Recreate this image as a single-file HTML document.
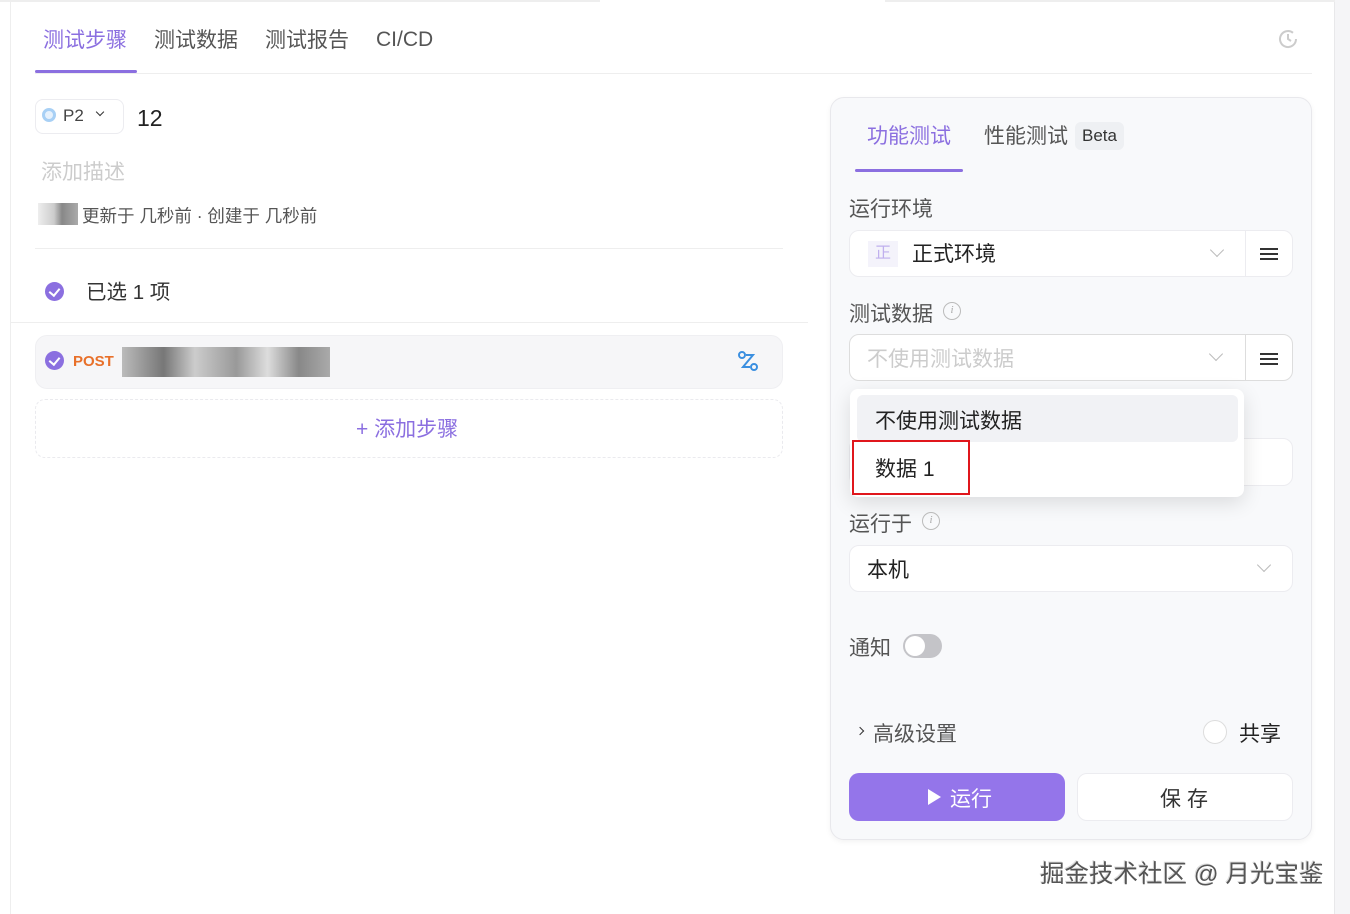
<!DOCTYPE html><html><head><meta charset="utf-8"><style>
*{box-sizing:border-box;margin:0;padding:0}
body{width:1350px;height:914px;overflow:hidden;background:#fff;font-family:"Liberation Sans","Noto Sans CJK SC",sans-serif;color:#333;position:relative}
.a{position:absolute;line-height:1.6}
.purple{color:#8b6fe0}
.box{position:absolute;background:#fff;border:1px solid #ececf0;border-radius:10px}
.chev{position:absolute;width:10px;height:10px;border-right:1.5px solid #bbb;border-bottom:1.5px solid #bbb;transform:rotate(45deg)}
.ham{position:absolute;width:18px;height:12px;border-top:2px solid #333;border-bottom:2px solid #333}
.ham:after{content:"";position:absolute;left:0;right:0;top:3px;border-top:2px solid #333}
.info{position:absolute;width:18px;height:18px;border:1.5px solid #bbb;border-radius:50%;font:italic 11px "Liberation Serif",serif;color:#aaa;text-align:center;line-height:15px}
.cb{position:absolute;width:19px;height:19px;border-radius:50%;background:#8b6fe0}
.cb:after{content:"";position:absolute;left:6px;top:4px;width:5px;height:8px;border-right:2px solid #fff;border-bottom:2px solid #fff;transform:rotate(40deg)}
</style></head><body>
<div class="a" style="left:10px;top:0;width:1px;height:914px;background:#eee"></div>
<div class="a" style="left:1334px;top:0;width:16px;height:914px;background:#f5f5f7;border-left:1px solid #e8e8ea"></div>
<div class="a" style="left:0;top:0;width:600px;height:2px;background:#eee"></div>
<div class="a" style="left:885px;top:0;width:450px;height:2px;background:#eee"></div>
<!-- tabs -->
<div class="a purple" style="left:43px;top:24px;font-size:21px">测试步骤</div>
<div class="a" style="left:154px;top:24px;font-size:21px;color:#555">测试数据</div>
<div class="a" style="left:265px;top:24px;font-size:21px;color:#555">测试报告</div>
<div class="a" style="left:376px;top:23px;font-size:21px;color:#555">CI/CD</div>
<div class="a" style="left:35px;top:70px;width:102px;height:3px;border-radius:2px;background:#8b6fe0"></div>
<div class="a" style="left:35px;top:73px;width:1277px;height:1px;background:#eee"></div>
<svg class="a" style="left:1276px;top:27px" width="24" height="24" viewBox="0 0 24 24" fill="none" stroke="#ccc" stroke-width="2"><path d="M20 12a8 8 0 1 1-3-6.2"/><path d="M12 7v5l3 2"/></svg>
<!-- P2 -->
<div class="box" style="left:35px;top:99px;width:89px;height:35px;border-radius:8px"></div>
<div class="a" style="left:42px;top:108px;width:14px;height:14px;border-radius:50%;border:3px solid #a8d0f5;background:#e6f1fc"></div>
<div class="a" style="left:63px;top:105px;font-size:17px;color:#444;line-height:1.3">P2</div>
<div class="a" style="left:97px;top:109px;width:6px;height:6px;border-right:1.5px solid #333;border-bottom:1.5px solid #333;transform:rotate(45deg)"></div>
<div class="a" style="left:137px;top:104px;font-size:23px;color:#222;line-height:1.3">12</div>
<div class="a" style="left:41px;top:156px;font-size:21px;color:#ccc">添加描述</div>
<div class="a" style="left:38px;top:203px;width:40px;height:22px;background:linear-gradient(90deg,#eee,#ccc 40%,#888 60%,#aaa)"></div>
<div class="a" style="left:82px;top:202px;font-size:17.5px;color:#555">更新于 几秒前 · 创建于 几秒前</div>
<div class="a" style="left:35px;top:248px;width:748px;height:1px;background:#eee"></div>
<div class="cb" style="left:45px;top:282px"></div>
<div class="a" style="left:86px;top:277px;font-size:20.5px;color:#333">已选 1 项</div>
<div class="a" style="left:11px;top:322px;width:797px;height:1px;background:#eee"></div>
<!-- step -->
<div class="a" style="left:35px;top:335px;width:748px;height:54px;background:#f6f6f8;border-radius:12px;border:1px solid #efeff2"></div>
<div class="cb" style="left:45px;top:351px"></div>
<div class="a" style="left:73px;top:352px;font-size:15px;font-weight:bold;color:#e8702a;line-height:1.3">POST</div>
<div class="a" style="left:122px;top:347px;width:208px;height:30px;background:linear-gradient(90deg,#bbb,#777 20%,#ccc 35%,#999 55%,#ddd 70%,#888 85%,#aaa)"></div>
<svg class="a" style="left:737px;top:350px" width="22" height="22" viewBox="0 0 22 22" fill="none" stroke="#3b8fe0" stroke-width="2"><circle cx="5" cy="5" r="3"/><circle cx="17" cy="17" r="3"/><path d="M9 5h7L6 17h7"/></svg>
<div class="a" style="left:35px;top:399px;width:748px;height:59px;border:1.5px dashed #eaeaee;border-radius:10px"></div>
<div class="a purple" style="left:356px;top:413px;font-size:21px">+ 添加步骤</div>
<!-- right panel -->
<div class="a" style="left:830px;top:97px;width:482px;height:743px;background:#f8f9fb;border:1px solid #e8e8ec;border-radius:14px;box-shadow:0 2px 6px rgba(0,0,0,.05)"></div>
<div class="a purple" style="left:867px;top:120px;font-size:21px">功能测试</div>
<div class="a" style="left:855px;top:169px;width:108px;height:3px;border-radius:2px;background:#8b6fe0"></div>
<div class="a" style="left:984px;top:120px;font-size:21px;color:#555">性能测试</div>
<div class="a" style="left:1075px;top:122px;width:49px;height:28px;background:#eef0f3;border-radius:6px;font-size:17px;color:#333;text-align:center;line-height:28px">Beta</div>
<div class="a" style="left:849px;top:193px;font-size:21px;color:#555">运行环境</div>
<div class="box" style="left:849px;top:230px;width:444px;height:47px"></div>
<div class="a" style="left:1245px;top:231px;width:1px;height:45px;background:#ececf0"></div>
<div class="a" style="left:868px;top:241px;width:30px;height:26px;background:#f4f3fb;color:#c0b0ee;font-size:16px;text-align:center;line-height:26px">正</div>
<div class="a" style="left:912px;top:238px;font-size:21px;color:#222">正式环境</div>
<div class="chev" style="left:1212px;top:245px"></div>
<div class="ham" style="left:1260px;top:248px"></div>
<div class="a" style="left:849px;top:298px;font-size:21px;color:#555">测试数据</div>
<div class="info" style="left:943px;top:302px">i</div>
<div class="box" style="left:849px;top:334px;width:444px;height:47px;border-color:#ddd"></div>
<div class="a" style="left:1245px;top:335px;width:1px;height:45px;background:#ddd"></div>
<div class="a" style="left:867px;top:343px;font-size:21px;color:#ccc">不使用测试数据</div>
<div class="chev" style="left:1211px;top:349px"></div>
<div class="ham" style="left:1260px;top:353px"></div>
<div class="box" style="left:849px;top:438px;width:444px;height:48px"></div>
<!-- dropdown -->
<div class="a" style="left:850px;top:389px;width:394px;height:108px;background:#fff;border-radius:8px;box-shadow:0 6px 20px rgba(0,0,0,.12)"></div>
<div class="a" style="left:857px;top:395px;width:381px;height:47px;background:#f1f2f5;border-radius:6px"></div>
<div class="a" style="left:875px;top:405px;font-size:21px;color:#222">不使用测试数据</div>
<div class="a" style="left:852px;top:440px;width:118px;height:55px;border:2.5px solid #e0161c"></div>
<div class="a" style="left:875px;top:453px;font-size:21px;color:#222">数据 1</div>
<div class="a" style="left:849px;top:508px;font-size:21px;color:#555">运行于</div>
<div class="info" style="left:922px;top:512px">i</div>
<div class="box" style="left:849px;top:545px;width:444px;height:47px"></div>
<div class="a" style="left:867px;top:554px;font-size:21px;color:#222">本机</div>
<div class="chev" style="left:1259px;top:560px"></div>
<div class="a" style="left:849px;top:632px;font-size:21px;color:#555">通知</div>
<div class="a" style="left:903px;top:634px;width:39px;height:24px;border-radius:12px;background:#c4c4c8"></div>
<div class="a" style="left:905px;top:636px;width:20px;height:20px;border-radius:50%;background:#fff"></div>
<div class="a" style="left:857px;top:728px;width:6px;height:6px;border-right:1.5px solid #333;border-top:1.5px solid #333;transform:rotate(45deg)"></div>
<div class="a" style="left:873px;top:718px;font-size:21px;color:#555">高级设置</div>
<div class="a" style="left:1203px;top:720px;width:24px;height:24px;border:1px solid #ddd;border-radius:50%;background:#fff"></div>
<div class="a" style="left:1239px;top:718px;font-size:21px;color:#222">共享</div>
<div class="a" style="left:849px;top:773px;width:216px;height:48px;border-radius:10px;background:#9475ea"></div>
<div class="a" style="left:928px;top:789px;width:0;height:0;border-left:13px solid #fff;border-top:8px solid transparent;border-bottom:8px solid transparent"></div>
<div class="a" style="left:950px;top:783px;font-size:21px;color:#fff">运行</div>
<div class="box" style="left:1077px;top:773px;width:216px;height:48px"></div>
<div class="a" style="left:1160px;top:783px;font-size:21px;color:#333;letter-spacing:6px">保存</div>
<div class="a" style="left:1040px;top:855px;font-size:24.5px;color:#555;text-shadow:1px 1px 0 #fff,-1px -1px 0 #ddd">掘金技术社区 @ 月光宝鉴</div>
</body></html>
